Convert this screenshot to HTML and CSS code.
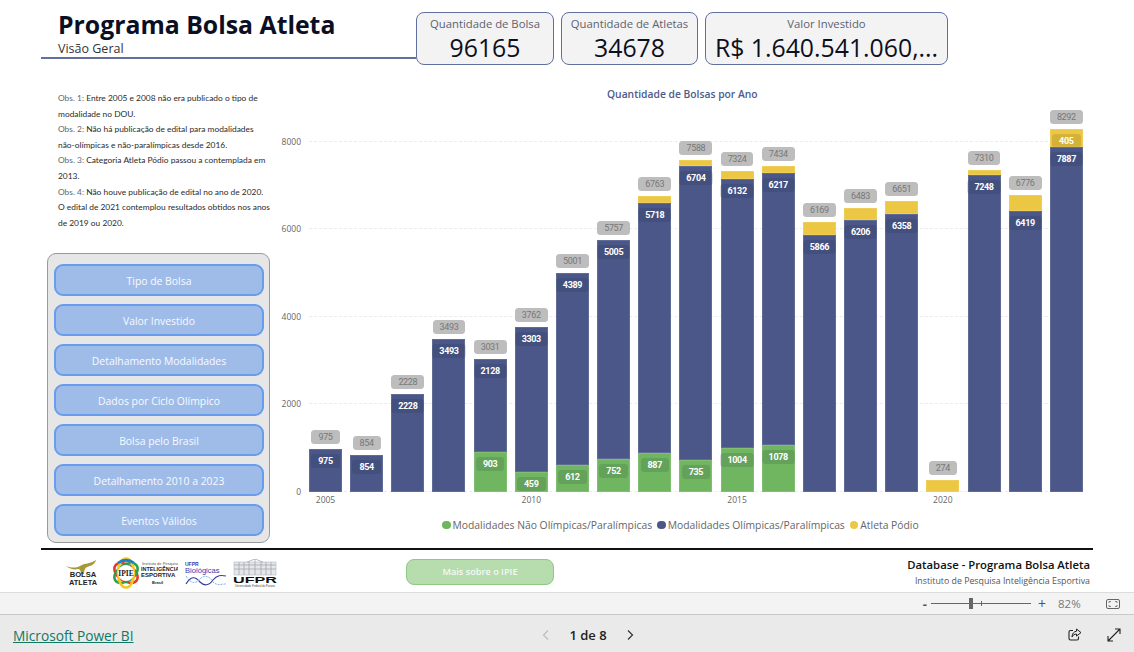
FILE: index.html
```html
<!DOCTYPE html>
<html lang="pt-BR">
<head>
<meta charset="utf-8">
<title>Programa Bolsa Atleta</title>
<link rel="stylesheet" href="styles.css">
</head>
<body>
<main class="report">
  <header class="top">
    <div class="heading">
      <h1>Programa Bolsa Atleta</h1>
      <p>Visão Geral</p>
    </div>
    <div class="kpi kpi-a"><span>Quantidade de Bolsa</span><strong>96165</strong></div>
    <div class="kpi kpi-b"><span>Quantidade de Atletas</span><strong>34678</strong></div>
    <div class="kpi kpi-l"><span>Valor Investido</span><strong>R$ 1.640.541.060,...</strong></div>
  </header>
  <section class="content">
    <aside class="side">
      <p class="notes"><i>Obs. 1:</i> Entre 2005 e 2008 não era publicado o tipo de<br>modalidade no DOU.<br><i>Obs. 2:</i> Não há publicação de edital para modalidades<br>não-olímpicas e não-paralímpicas desde 2016.<br><i>Obs. 3:</i> Categoria Atleta Pódio passou a contemplada em<br>2013.<br><i>Obs. 4:</i> Não houve publicação de edital no ano de 2020.<br>O edital de 2021 contemplou resultados obtidos nos anos<br>de 2019 ou 2020.</p>
      <nav class="panel">
        <a class="btn">Tipo de Bolsa</a>
        <a class="btn">Valor Investido</a>
        <a class="btn">Detalhamento Modalidades</a>
        <a class="btn">Dados por Ciclo Olímpico</a>
        <a class="btn">Bolsa pelo Brasil</a>
        <a class="btn">Detalhamento 2010 a 2023</a>
        <a class="btn">Eventos Válidos</a>
      </nav>
    </aside>
    <figure class="chart">
      <figcaption>Quantidade de Bolsas por Ano</figcaption>
      <div class="plot">
        <div class="grid g8"><span>8000</span></div>
        <div class="grid g6"><span>6000</span></div>
        <div class="grid g4"><span>4000</span></div>
        <div class="grid g2"><span>2000</span></div>
        <div class="grid g0"><span>0</span></div>
        <div class="bars">
          <div class="col"><b class="total">975</b><div class="seg navy" style="--v:975"><b class="val">975</b></div></div>
          <div class="col"><b class="total">854</b><div class="seg navy" style="--v:854"><b class="val">854</b></div></div>
          <div class="col"><b class="total">2228</b><div class="seg navy" style="--v:2228"><b class="val">2228</b></div></div>
          <div class="col"><b class="total">3493</b><div class="seg navy" style="--v:3493"><b class="val">3493</b></div></div>
          <div class="col"><b class="total">3031</b><div class="seg navy" style="--v:2128"><b class="val">2128</b></div><div class="seg green" style="--v:903"><b class="val">903</b></div></div>
          <div class="col"><b class="total">3762</b><div class="seg navy" style="--v:3303"><b class="val">3303</b></div><div class="seg green" style="--v:459"><b class="val">459</b></div></div>
          <div class="col"><b class="total">5001</b><div class="seg navy" style="--v:4389"><b class="val">4389</b></div><div class="seg green" style="--v:612"><b class="val">612</b></div></div>
          <div class="col"><b class="total">5757</b><div class="seg navy" style="--v:5005"><b class="val">5005</b></div><div class="seg green" style="--v:752"><b class="val">752</b></div></div>
          <div class="col"><b class="total">6763</b><div class="seg yellow" style="--v:158"></div><div class="seg navy" style="--v:5718"><b class="val">5718</b></div><div class="seg green" style="--v:887"><b class="val">887</b></div></div>
          <div class="col"><b class="total">7588</b><div class="seg yellow" style="--v:149"></div><div class="seg navy" style="--v:6704"><b class="val">6704</b></div><div class="seg green" style="--v:735"><b class="val">735</b></div></div>
          <div class="col"><b class="total">7324</b><div class="seg yellow" style="--v:188"></div><div class="seg navy" style="--v:6132"><b class="val">6132</b></div><div class="seg green" style="--v:1004"><b class="val">1004</b></div></div>
          <div class="col"><b class="total">7434</b><div class="seg yellow" style="--v:139"></div><div class="seg navy" style="--v:6217"><b class="val">6217</b></div><div class="seg green" style="--v:1078"><b class="val">1078</b></div></div>
          <div class="col"><b class="total">6169</b><div class="seg yellow" style="--v:303"></div><div class="seg navy" style="--v:5866"><b class="val">5866</b></div></div>
          <div class="col"><b class="total">6483</b><div class="seg yellow" style="--v:277"></div><div class="seg navy" style="--v:6206"><b class="val">6206</b></div></div>
          <div class="col"><b class="total">6651</b><div class="seg yellow" style="--v:293"></div><div class="seg navy" style="--v:6358"><b class="val">6358</b></div></div>
          <div class="col"><b class="total">274</b><div class="seg yellow" style="--v:274"></div></div>
          <div class="col"><b class="total">7310</b><div class="seg yellow" style="--v:62"></div><div class="seg navy" style="--v:7248"><b class="val">7248</b></div></div>
          <div class="col"><b class="total">6776</b><div class="seg yellow" style="--v:357"></div><div class="seg navy" style="--v:6419"><b class="val">6419</b></div></div>
          <div class="col"><b class="total">8292</b><div class="seg yellow" style="--v:405"><b class="val val-y">405</b></div><div class="seg navy" style="--v:7887"><b class="val">7887</b></div></div>
        </div>
      </div>
      <div class="years">
        <span>2005</span><span></span><span></span><span></span><span></span>
        <span>2010</span><span></span><span></span><span></span><span></span>
        <span>2015</span><span></span><span></span><span></span><span></span>
        <span>2020</span><span></span><span></span><span></span>
      </div>
      <div class="legend">
        <span class="key k-green">Modalidades Não Olímpicas/Paralímpicas</span>
        <span class="key k-navy">Modalidades Olímpicas/Paralímpicas</span>
        <span class="key k-yellow">Atleta Pódio</span>
      </div>
    </figure>
  </section>
  <footer class="band">
    <div class="logos">
      <svg class="logo-bolsa" width="36" height="28" viewBox="0 0 36 28">
        <path d="M1 7 C7 9 11 9 15 7 C20 4 25 5 31 1 C30 5 26 7 22 8 C20 9 19 11 19 15 L16 15 C16 12 15 10 13 10 C9 11 5 10 1 7Z" fill="#a8983c"/>
        <text class="lt" x="18" y="18" text-anchor="middle" font-size="7.6">BOLSA</text>
        <text class="lt" x="18" y="26" text-anchor="middle" font-size="7.4">ATLETA</text>
      </svg>
      <svg class="logo-ipie" width="66" height="32" viewBox="0 0 66 32">
        <ellipse cx="14" cy="16" rx="13" ry="8" transform="rotate(35 14 16)" fill="none" stroke="#e53a2f" stroke-width="2.6"/>
        <ellipse cx="14" cy="16" rx="13" ry="8" transform="rotate(-35 14 16)" fill="none" stroke="#2e9e4f" stroke-width="2.6"/>
        <ellipse cx="14" cy="16" rx="8" ry="14.5" fill="none" stroke="#f2c81e" stroke-width="2.6"/>
        <path d="M6 6 A13 13 0 0 1 22 6" fill="none" stroke="#1f7fc4" stroke-width="2.8"/>
        <circle cx="14" cy="16" r="8" fill="#fff"/>
        <text class="lt serif" x="14" y="19" text-anchor="middle" font-size="7.5">IPIE</text>
        <text class="lt thin" x="30" y="8" font-size="4">Instituto de Pesquisa</text>
        <text class="lt" x="29" y="14" font-size="5.4">INTELIGÊNCIA</text>
        <text class="lt" x="29" y="20" font-size="6">ESPORTIVA</text>
        <text class="lt" x="40" y="27" font-size="4">Brasil</text>
      </svg>
      <svg class="logo-bio" width="42" height="26" viewBox="0 0 42 26">
        <text class="lt blue" x="0" y="6" font-size="5">UFPR</text>
        <text class="lt blue thin" x="0" y="13" font-size="7.6">Biológicas</text>
        <path d="M1 24 C6 16 10 16 15 22 C19 26 24 26 28 20 C32 15 36 15 41 16" fill="none" stroke="#2f3f9a" stroke-width="1.2"/>
        <path d="M1 16 C6 24 10 24 15 19 C19 15 24 15 28 22 C32 26 36 24 41 24" fill="none" stroke="#7fb4ee" stroke-width="1" stroke-dasharray="2 1"/>
      </svg>
      <svg class="logo-ufpr" width="44" height="29" viewBox="0 0 44 29">
        <rect x="1" y="3" width="42" height="13" fill="#e4e6ea" stroke="#b4b8c0" stroke-width=".6"/>
        <path d="M1 6 H43 M1 10 H43 M6 3 V16 M11 3 V16 M16 3 V16 M22 0 V16 M28 3 V16 M33 3 V16 M38 3 V16 M14 3 L22 0 L30 3" fill="none" stroke="#9ba0aa" stroke-width=".7"/>
        <text class="lt heavy" x="0" y="24" font-size="9.2" textLength="44" lengthAdjust="spacingAndGlyphs">UFPR</text>
        <text class="lt thin" x="2" y="28.4" font-size="3" textLength="40">Universidade Federal do Paraná</text>
      </svg>
    </div>
    <a class="more">Mais sobre o IPIE</a>
    <div class="source">
      <strong>Database - Programa Bolsa Atleta</strong>
      <span>Instituto de Pesquisa Inteligência Esportiva</span>
    </div>
  </footer>
</main>
<div class="zoombar">
  <span class="minus">-</span>
  <div class="slider"><i class="tick"></i><i class="thumb"></i></div>
  <span class="plus">+</span>
  <span class="pct">82%</span>
  <svg class="fit" width="14" height="10" viewBox="0 0 14 10"><rect x=".5" y=".5" width="13" height="9" rx="1.5" fill="none" stroke="#666"/><path d="M3 4 V2.5 H5 M9 2.5 H11 V4 M11 6 V7.5 H9 M5 7.5 H3 V6" fill="none" stroke="#666" stroke-width=".8"/></svg>
</div>
<div class="pbi">
  <a class="brand">Microsoft Power BI</a>
  <div class="pager">
    <svg width="7" height="10" viewBox="0 0 7 10"><path d="M6 .5 L1.5 5 L6 9.5" fill="none" stroke="#bdbdbd" stroke-width="1.2"/></svg>
    <span>1 de 8</span>
    <svg width="7" height="10" viewBox="0 0 7 10"><path d="M1 .5 L5.5 5 L1 9.5" fill="none" stroke="#333" stroke-width="1.2"/></svg>
  </div>
  <div class="tools">
    <svg width="14" height="13" viewBox="0 0 14 13"><path d="M5 2.5 H2.5 A1.5 1.5 0 0 0 1 4 V10.5 A1.5 1.5 0 0 0 2.5 12 H9 A1.5 1.5 0 0 0 10.5 10.5 V8.5" fill="none" stroke="#222" stroke-width="1.1"/><path d="M8.5 1 L13 4.6 L8.5 8 V6 C6.5 6 5 7 4 9 C4 5.8 6 3.4 8.5 3.2Z" fill="none" stroke="#222" stroke-width="1"/></svg>
    <svg width="14" height="14" viewBox="0 0 14 14"><path d="M1 13 L13 1 M8 1 H13 V6 M1 8 V13 H6" fill="none" stroke="#222" stroke-width="1.1"/></svg>
  </div>
</div>
</body>
</html>
```

FILE: styles.css
```css
* { box-sizing: border-box; }
html, body { margin: 0; padding: 0; }
body {
  width: 1134px;
  height: 652px;
  overflow: hidden;
  display: flex;
  flex-direction: column;
  background: #fff;
  font-family: "Open Sans", "Noto Sans", sans-serif;
  color: #111;
}

.report { height: 592px; padding: 0 41px; display: flex; flex-direction: column; }

/* header */
.top { height: 58px; display: flex; align-items: flex-start; gap: 7px; }
.heading {
  width: 375px;
  height: 59px;
  margin-right: -7px;
  padding-left: 17px;
  border-bottom: 2px solid #626f9f;
}
.heading h1 {
  margin: 7px 0 0;
  font-size: 24.8px;
  line-height: 34px;
  font-weight: 700;
  color: #0b0f24;
  white-space: nowrap;
}
.heading p { margin: 0; font-size: 12.5px; line-height: 16px; color: #333; }
.kpi {
  margin-top: 12px;
  height: 53px;
  position: relative;
  z-index: 1;
  background: #f3f3f3;
  border: 1px solid #616f9f;
  border-radius: 8px;
  display: flex;
  flex-direction: column;
  align-items: center;
  white-space: nowrap;
}
.kpi-a { width: 138px; }
.kpi-b { width: 137px; }
.kpi-l { width: 243px; }
.kpi span { margin-top: 2px; font-size: 11.3px; line-height: 18px; color: #5b6270; }
.kpi strong { font-size: 24.8px; line-height: 28px; font-weight: 400; color: #0c0f1e; }

/* content */
.content { height: 490px; display: flex; }
.side { width: 242px; flex: none; }
.notes {
  margin: 33px 0 0 17px;
  font-family: Lato, "Open Sans", sans-serif;
  font-size: 8.4px;
  line-height: 15.6px;
  color: #2a2a2a;
  white-space: nowrap;
}
.notes i { font-style: normal; color: #666; }
.panel {
  margin: 22px 0 0 6px;
  width: 223px;
  height: 290px;
  padding: 10px 5px 6px 6px;
  background: #e6e6e6;
  border: 1px solid #9a9a9a;
  border-radius: 9px;
  display: flex;
  flex-direction: column;
  justify-content: space-between;
}
.btn {
  height: 32px;
  background: #9fbce9;
  border: 2px solid #689cec;
  border-radius: 9px;
  color: #f8faff;
  font-size: 10.4px;
  line-height: 30px;
  text-align: center;
  white-space: nowrap;
}

/* chart */
.chart { flex: 1; margin: 0; display: flex; flex-direction: column; }
.chart figcaption {
  margin: 29px 0 0 324px;
  font-size: 10.3px;
  line-height: 14px;
  font-weight: 600;
  color: #4d5b8a;
  white-space: nowrap;
}
.plot { position: relative; width: 774px; height: 384px; margin: 7px 0 0 26px; }
.grid { position: absolute; left: 0; right: 0; border-top: 1px dashed #ececec; }
.grid span {
  position: absolute;
  right: 782px;
  top: -7px;
  font-size: 8.5px;
  line-height: 13px;
  color: #666;
}
.g8 { bottom: 350.4px; }
.g6 { bottom: 262.8px; }
.g4 { bottom: 175.2px; }
.g2 { bottom: 87.6px; }
.g0 { bottom: 0; }
.bars { position: absolute; inset: 0; display: flex; justify-content: space-between; align-items: flex-end; }
.col { width: 33px; display: flex; flex-direction: column; align-items: center; }
.total, .val {
  font-family: Roboto, sans-serif;
  font-size: 9px;
  letter-spacing: -.35px;
  line-height: 14px;
  height: 14px;
  padding: 0 7px;
  text-align: center;
  border-radius: 3.5px;
  white-space: nowrap;
}
.total {
  margin-bottom: 5px;
  background: #bdbdbd;
  color: #777;
  font-weight: 400;
}
.seg {
  width: 33px;
  height: calc(var(--v) * 0.0438px);
  flex: none;
  display: flex;
  justify-content: center;
  align-items: flex-start;
  padding-top: 5px;
  box-shadow: inset 0 0 0 1px rgba(255,255,255,.12);
}
.navy { background: #4a5788; }
.green { background: #70b55f; }
.yellow { background: #ecc743; }
.val {
  color: #fff;
  font-weight: 700;
  background: rgba(30,40,70,.14);
}
.val-y { background: rgba(90,70,0,.16); }

.years { margin: 1px 0 0 26px; width: 774px; display: flex; justify-content: space-between; }
.years span { width: 33px; text-align: center; font-size: 8.5px; line-height: 14px; color: #666; }
.legend { margin: 10px 0 0 159px; display: flex; gap: 5px; white-space: nowrap; }
.key { display: flex; align-items: center; gap: 2px; font-size: 10.35px; line-height: 16px; color: #666; }
.key::before { content: ""; width: 8.5px; height: 8.5px; border-radius: 50%; }
.k-green::before { background: #70b55f; }
.k-navy::before { background: #4a5788; }
.k-yellow::before { background: #ecc743; }

/* footer band */
.band { height: 44px; border-top: 2px solid #111; display: flex; align-items: flex-start; }
.logos { width: 365px; padding: 7px 0 0 24px; display: flex; align-items: center; }
.logos svg { flex: none; display: block; }
.logo-ipie { margin-left: 11px; }
.logo-bio { margin-left: 7px; }
.logo-ufpr { margin-left: 6px; }
.lt { font-family: "Liberation Sans", sans-serif; font-weight: 700; fill: #222; }
.serif { font-family: "Liberation Serif", serif; }
.thin { font-weight: 400; fill: #555; }
.blue { fill: #3340b0; }
.heavy { fill: #111; }
.more {
  margin-top: 9px;
  width: 148px;
  height: 26px;
  background: #b7dcae;
  border: 1px solid #8fca82;
  border-radius: 8px;
  color: #f4faf2;
  font-size: 9.2px;
  font-weight: 600;
  line-height: 24px;
  text-align: center;
}
.source { margin-left: auto; padding-right: 3px; display: flex; flex-direction: column; align-items: flex-end; white-space: nowrap; }
.source strong { margin-top: 7px; font-size: 11.3px; line-height: 16px; font-weight: 600; color: #111; }
.source span { font-size: 8.8px; line-height: 16px; color: #555; }

/* zoom bar */
.zoombar {
  height: 23px;
  padding-right: 14px;
  background: #f3f3f3;
  border-top: 1px solid #dcdcdc;
  border-bottom: 1px solid #c8c8c8;
  display: flex;
  align-items: center;
  justify-content: flex-end;
  color: #555;
}
.minus { font-size: 13px; font-weight: 700; line-height: 14px; margin-right: 4px; }
.slider { position: relative; width: 100px; height: 1px; background: #666; }
.thumb { position: absolute; left: 38px; top: -5px; width: 4px; height: 11px; background: #666; }
.tick { position: absolute; left: 50px; top: -2px; width: 1px; height: 5px; background: #666; }
.plus { margin-left: 7px; font-size: 14px; line-height: 14px; }
.pct { margin-left: 12px; font-size: 11.5px; color: #777; width: 48px; }
.fit { flex: none; }

/* power bi bar */
.pbi {
  height: 37px;
  padding: 2px 13px 0;
  background: #eaeaea;
  display: grid;
  grid-template-columns: 1fr auto 1fr;
  align-items: center;
}
.brand { margin-top: 1px; font-size: 13.7px; color: #117865; text-decoration: underline; white-space: nowrap; }
.pager { display: flex; align-items: center; gap: 20px; font-size: 13px; font-weight: 600; color: #222; margin-left: 42px; }
.tools { justify-self: end; display: flex; align-items: center; gap: 25px; }
```
